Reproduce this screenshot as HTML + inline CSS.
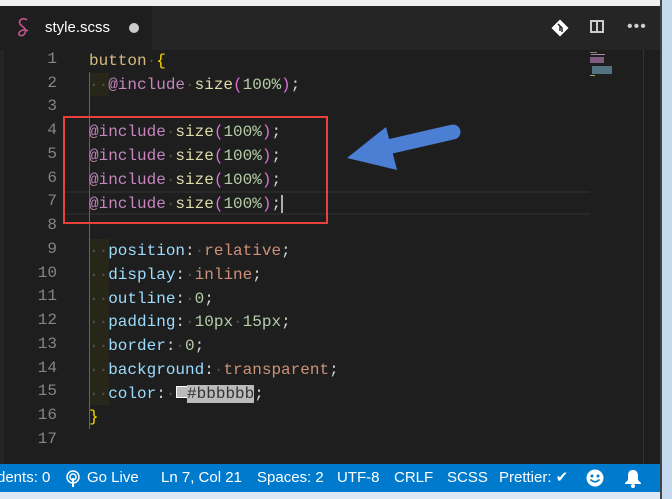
<!DOCTYPE html><html><head><style>
body{margin:0;width:672px;height:499px;overflow:hidden;background:#dce8f4;position:relative;font-family:"Liberation Sans",sans-serif}
.a{position:absolute}
.code{font-family:"Liberation Mono",monospace;font-size:16px;white-space:pre;color:#d4d4d4}
.ln{position:absolute;left:0;width:57px;text-align:right;font-family:"Liberation Mono",monospace;font-size:16px;color:#858585}
.s{color:#d7ba7d}.y{color:#ffd700}.k{color:#c586c0}.f{color:#dcdcaa}.p{color:#da70d6}.n{color:#b5cea8}.pr{color:#9cdcfe}.v{color:#ce9178}.d{color:#505050}
.mm{position:absolute;height:1px}
</style></head><body>
<div class="a" style="left:0;top:0;width:660px;height:6px;background:#f0f0f0"></div>
<div class="a" style="left:0;top:6px;width:660px;height:44px;background:#252526"></div>
<div class="a" style="left:0;top:6px;width:152px;height:44px;background:#1e1e1e"></div>
<svg class="a" style="left:16px;top:17px" width="16" height="22" viewBox="0 0 16 22"><path d="M11 3C7 0 2 3 4 7c2 3 7 4 5 9-2 4-7 3-6 0 1-3 6-4 9-2" fill="none" stroke="#c6538c" stroke-width="1.6"/></svg>
<div class="a" style="left:45px;top:19px;color:#fff;font-size:15px">style.scss</div>
<div class="a" style="left:129px;top:23px;width:10px;height:10px;border-radius:50%;background:#ccc"></div>
<svg class="a" style="left:551px;top:19px" width="18" height="18" viewBox="0 0 18 18"><rect x="3" y="3" width="12" height="12" transform="rotate(45 9 9)" fill="#fff"/><path d="M7 5l4 4v4M9 7v5" stroke="#252526" stroke-width="1.5" fill="none"/></svg>
<div class="a" style="left:590px;top:20px;width:14px;height:13px;border:2px solid #ccc;box-sizing:border-box"></div>
<div class="a" style="left:596px;top:20px;width:2px;height:13px;background:#ccc"></div>
<div class="a" style="left:627px;top:18px;color:#ccc;font-size:16px;letter-spacing:1px">•••</div>
<div class="a" style="left:0;top:50px;width:660px;height:414px;background:#1e1e1e"></div>
<div class="a" style="left:0;top:50px;width:4px;height:414px;background:#252526"></div>
<div class="a" style="left:643px;top:50px;width:1px;height:414px;background:#333"></div>
<div class="a" style="left:660px;top:0;width:12px;height:499px;background:#c4d8ee;border-left:2px solid #444"></div>
<div class="mm" style="left:590px;top:52px;width:7px;background:#887"></div>
<div class="mm" style="left:591px;top:54px;width:14px;background:#a8a"></div>
<div class="mm" style="left:590px;top:57px;width:14px;height:6px;background:#a7a;opacity:.7"></div>
<div class="mm" style="left:592px;top:66px;width:20px;height:8px;background:#69a;opacity:.7"></div>
<div class="mm" style="left:590px;top:75px;width:5px;background:#aa6"></div>
<div class="a" style="left:63px;top:191px;width:527px;height:24px;border-top:2px solid #282828;border-bottom:2px solid #282828;box-sizing:border-box"></div>
<div class="a" style="left:89px;top:72px;width:1px;height:357px;background:#6b6b2a"></div>
<div class="a" style="left:90px;top:73px;width:19px;height:23px;background:#262619"></div>
<div class="a" style="left:90px;top:239px;width:19px;height:166px;background:#262619"></div>
<div class="ln" style="top:50px">1</div><div class="ln" style="top:74px">2</div><div class="ln" style="top:97px">3</div><div class="ln" style="top:121px">4</div><div class="ln" style="top:145px">5</div><div class="ln" style="top:169px">6</div><div class="ln" style="top:192px">7</div><div class="ln" style="top:216px">8</div><div class="ln" style="top:240px">9</div><div class="ln" style="top:264px">10</div><div class="ln" style="top:287px">11</div><div class="ln" style="top:311px">12</div><div class="ln" style="top:335px">13</div><div class="ln" style="top:359px">14</div><div class="ln" style="top:382px">15</div><div class="ln" style="top:406px">16</div><div class="ln" style="top:430px">17</div>
<div class="a code" style="left:89px;top:50px;line-height:23.75px"><span class="s">button</span><span class="d">·</span><span class="y">{</span>
<span class="d">··</span><span class="k">@include</span><span class="d">·</span><span class="f">size</span><span class="p">(</span><span class="n">100%</span><span class="p">)</span>;

<span class="k">@include</span><span class="d">·</span><span class="f">size</span><span class="p">(</span><span class="n">100%</span><span class="p">)</span>;
<span class="k">@include</span><span class="d">·</span><span class="f">size</span><span class="p">(</span><span class="n">100%</span><span class="p">)</span>;
<span class="k">@include</span><span class="d">·</span><span class="f">size</span><span class="p">(</span><span class="n">100%</span><span class="p">)</span>;
<span class="k">@include</span><span class="d">·</span><span class="f">size</span><span class="p">(</span><span class="n">100%</span><span class="p">)</span>;<span style="border-left:2px solid #aeafad"></span>

<span class="d">··</span><span class="pr">position</span>:<span class="d">·</span><span class="v">relative</span>;
<span class="d">··</span><span class="pr">display</span>:<span class="d">·</span><span class="v">inline</span>;
<span class="d">··</span><span class="pr">outline</span>:<span class="d">·</span><span class="n">0</span>;
<span class="d">··</span><span class="pr">padding</span>:<span class="d">·</span><span class="n">10px</span><span class="d">·</span><span class="n">15px</span>;
<span class="d">··</span><span class="pr">border</span>:<span class="d">·</span><span class="n">0</span>;
<span class="d">··</span><span class="pr">background</span>:<span class="d">·</span><span class="v">transparent</span>;
<span class="d">··</span><span class="pr">color</span>:<span class="d">·</span> <span class="v"><span style="display:inline-block;width:10px;height:10px;border:1px solid #fff;background:#bbb;margin-left:-9px;margin-right:-1px"></span><span style="background:#bbb;color:#333">#bbbbbb</span></span>;
<span class="y">}</span></div>
<div class="a" style="left:63px;top:116px;width:265px;height:108px;border:2px solid #e8413b;box-sizing:border-box"></div>
<svg class="a" style="left:340px;top:120px" width="125" height="60" viewBox="340 120 125 60"><path d="M453 132L392 146" stroke="#4a7fd4" stroke-width="15" stroke-linecap="round"/><path d="M347 158L386 127L397 170Z" fill="#4a7fd4"/></svg>
<div class="a" style="left:0;top:464px;width:660px;height:28px;background:#007acc;color:#fff;font-size:15px;line-height:28px;white-space:nowrap">
<span class="a" style="left:-3px">dents: 0</span>
<svg class="a" style="left:65px;top:6px" width="16" height="18" viewBox="0 0 16 18"><circle cx="8" cy="7" r="6" fill="none" stroke="#fff" stroke-width="1.5"/><circle cx="8" cy="7" r="3" fill="none" stroke="#fff" stroke-width="1.5"/><rect x="7" y="8" width="2" height="9" fill="#fff"/></svg>
<span class="a" style="left:87px">Go Live</span>
<span class="a" style="left:161px">Ln 7, Col 21</span>
<span class="a" style="left:257px">Spaces: 2</span>
<span class="a" style="left:337px">UTF-8</span>
<span class="a" style="left:394px">CRLF</span>
<span class="a" style="left:447px">SCSS</span>
<span class="a" style="left:499px">Prettier: ✔</span>
<svg class="a" style="left:586px;top:5px" width="18" height="18" viewBox="0 0 18 18"><circle cx="9" cy="9" r="8.5" fill="#fff"/><circle cx="6" cy="7" r="1.5" fill="#007acc"/><circle cx="12" cy="7" r="1.5" fill="#007acc"/><path d="M4.5 10.5Q9 15 13.5 10.5" stroke="#007acc" stroke-width="1.6" fill="none"/></svg>
<svg class="a" style="left:624px;top:5px" width="18" height="19" viewBox="0 0 18 19"><path d="M9 1c-4 0-5 3-5 6v4l-3 3v1h16v-1l-3-3V7c0-3-1-6-5-6z" fill="#fff"/><circle cx="9" cy="17" r="2" fill="#fff"/></svg>
</div>
</body></html>
